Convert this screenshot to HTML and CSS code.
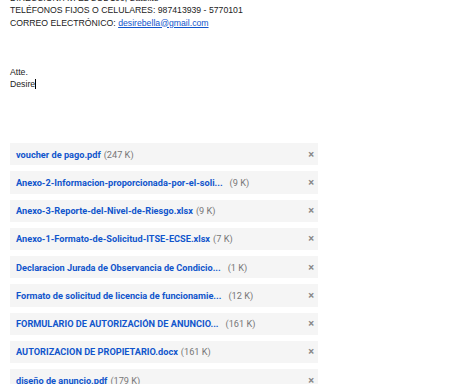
FILE: index.html
```html
<!DOCTYPE html>
<html lang="es">
<head>
  <meta charset="UTF-8">
  <meta name="viewport" content="width=device-width, initial-scale=1.0">
  <title>Redactar</title>
  <link rel="stylesheet" href="styles.css">
</head>
<body>
  <div class="compose">
    <div class="compose-body">
      <div>DIRECCIÓN: AV. EL SOL 100, Satélite</div>
      <div>TELÉFONOS FIJOS O CELULARES: 987413939 - 5770101</div>
      <div>CORREO ELECTRÓNICO: <a href="#">desirebella@gmail.com</a></div>
      <div><br></div>
      <div><br></div>
      <div><br></div>
      <div>Atte.</div>
      <div>Desire<span class="caret"></span></div>
    </div>

    <div class="attachments">
      <div class="attachment">
        <span class="att-name">voucher de pago.pdf</span>
        <span class="att-size">(247 K)</span>
        <span class="att-remove">&times;</span>
      </div>
      <div class="attachment">
        <span class="att-name">Anexo-2-Informacion-proporcionada-por-el-soli...</span>
        <span class="att-size gap">(9 K)</span>
        <span class="att-remove">&times;</span>
      </div>
      <div class="attachment">
        <span class="att-name">Anexo-3-Reporte-del-Nivel-de-Riesgo.xlsx</span>
        <span class="att-size">(9 K)</span>
        <span class="att-remove">&times;</span>
      </div>
      <div class="attachment">
        <span class="att-name">Anexo-1-Formato-de-Solicitud-ITSE-ECSE.xlsx</span>
        <span class="att-size">(7 K)</span>
        <span class="att-remove">&times;</span>
      </div>
      <div class="attachment">
        <span class="att-name">Declaracion Jurada de Observancia de Condicio...</span>
        <span class="att-size gap">(1 K)</span>
        <span class="att-remove">&times;</span>
      </div>
      <div class="attachment">
        <span class="att-name">Formato de solicitud de licencia de funcionamie...</span>
        <span class="att-size gap">(12 K)</span>
        <span class="att-remove">&times;</span>
      </div>
      <div class="attachment">
        <span class="att-name">FORMULARIO DE AUTORIZACIÓN DE ANUNCIO...</span>
        <span class="att-size gap">(161 K)</span>
        <span class="att-remove">&times;</span>
      </div>
      <div class="attachment">
        <span class="att-name">AUTORIZACION DE PROPIETARIO.docx</span>
        <span class="att-size">(161 K)</span>
        <span class="att-remove">&times;</span>
      </div>
      <div class="attachment">
        <span class="att-name">diseño de anuncio.pdf</span>
        <span class="att-size">(179 K)</span>
        <span class="att-remove">&times;</span>
      </div>
    </div>
  </div>
</body>
</html>
```

FILE: styles.css
```css
/* Gmail compose, attachment list */
body {
  margin: 0;
  padding: 0;
  background: #ffffff;
  overflow: hidden;
}

.compose {
  padding: 0 10px;
}

.compose-body {
  font-family: "Liberation Sans", Arial, sans-serif;
  font-size: 8.7px;
  line-height: 12.25px;
  color: #222222;
  margin-top: -8px;
}

.compose-body a {
  color: #1155cc;
}

.caret {
  display: inline-block;
  width: 1px;
  height: 10px;
  background: #000000;
  vertical-align: -2px;
}

.attachments {
  margin-top: 53px;
  width: 308px;
}

.attachment {
  display: flex;
  align-items: center;
  height: 22.25px;
  margin-bottom: 6px;
  padding: 0 4px 0 6px;
  background: #f5f5f5;
  font-family: Roboto, Arial, sans-serif;
  font-size: 9.2px;
}

.att-name {
  color: #1155cc;
  font-weight: bold;
  white-space: nowrap;
}

.att-size {
  color: #777777;
  margin-left: 3px;
  white-space: nowrap;
}

.att-size.gap {
  margin-left: 7px;
}

.att-remove {
  margin-left: auto;
  color: #888888;
  font-size: 11px;
  font-weight: bold;
}
```
